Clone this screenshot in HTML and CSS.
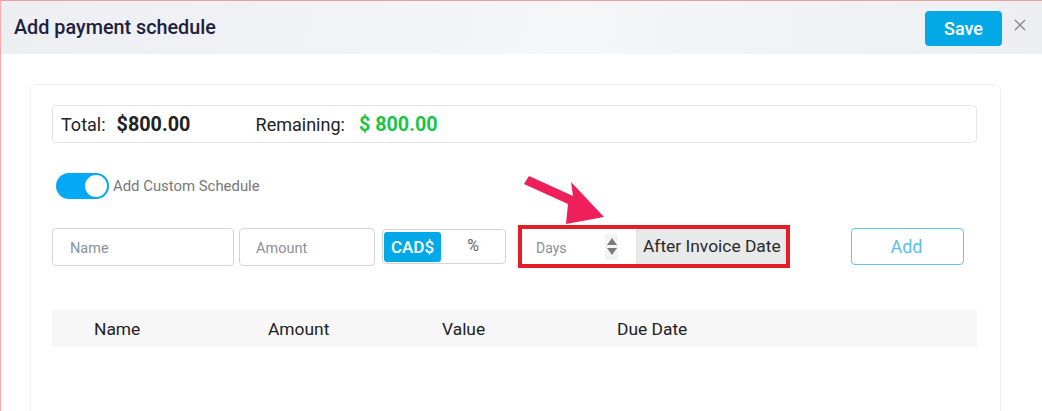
FILE: index.html
```html
<!DOCTYPE html>
<html>
<head>
<meta charset="utf-8">
<link rel="stylesheet" href="styles.css">
</head>
<body>
<div class="modal">
  <div class="modal-header">
    <h1 class="title">Add payment schedule</h1>
    <div class="header-actions">
      <button class="btn-save">Save</button>
      <span class="close">
        <svg width="12" height="12" viewBox="0 0 12 12"><path d="M1 1 L11 11 M11 1 L1 11" stroke="#888" stroke-width="1.3" fill="none"/></svg>
      </span>
    </div>
  </div>
  <div class="modal-body">
    <div class="card">
      <div class="totals">
        <span class="lbl">Total:</span>
        <span class="val">$800.00</span>
        <span class="lbl lbl-rem">Remaining:</span>
        <span class="val green">$ 800.00</span>
      </div>
      <div class="switch-row">
        <span class="switch"><span class="knob"></span></span>
        <span class="switch-label">Add Custom Schedule</span>
      </div>
      <div class="form-row">
        <div class="input in-name">Name</div>
        <div class="input in-amount">Amount</div>
        <div class="seg">
          <span class="seg-on">CAD$</span>
          <span class="seg-off">%</span>
        </div>
        <div class="highlight">
          <svg class="arrow" width="82" height="50" viewBox="0 0 82 50"><polygon points="5,1 49,21 47,7 80,42 42,49 44,29 0,9" fill="#ee1f5b"/></svg>
          <div class="days">
            <span class="days-ph">Days</span>
            <span class="spin"><span class="up"></span><span class="down"></span></span>
          </div>
          <div class="after">After Invoice Date</div>
        </div>
        <button class="btn-add">Add</button>
      </div>
      <div class="table-head">
        <span class="th th-name">Name</span>
        <span class="th th-amount">Amount</span>
        <span class="th th-value">Value</span>
        <span class="th th-due">Due Date</span>
      </div>
    </div>
  </div>
</div>
</body>
</html>
```
FILE: styles.css
```css
* { box-sizing: border-box; }
html, body { margin: 0; padding: 0; background: #fff; }
body { font-family: Roboto, "Liberation Sans", sans-serif; width: 1042px; height: 411px; overflow: hidden; }

.modal {
  width: 1042px;
  height: 411px;
  border-left: 1px solid #f5a9a9;
  border-top: 1px solid #e9a0a0;
  background: #fff;
}
.modal-header {
  height: 53px;
  display: flex;
  align-items: center;
  justify-content: space-between;
  padding: 0 16px 0 13px;
  background: linear-gradient(100deg, #eceef2 0%, #f5f6f8 55%, #eceef2 100%);
}
.title {
  margin: 0;
  font-size: 19.8px;
  font-weight: 500;
  color: #1d2140;
  padding-bottom: 1px;
}
.header-actions { display: flex; align-items: center; gap: 12px; }
.btn-save {
  width: 77px;
  height: 35px;
  border: none;
  border-radius: 4px;
  background: #03a9e6;
  color: #fff;
  font-family: inherit;
  font-size: 18px;
  font-weight: 500;
  padding: 0;
  margin-top: 1px;
}
.close { display: flex; width: 12px; height: 12px; margin-top: -5px; }

.modal-body { padding: 30px 0 0 29px; }
.card {
  width: 971px;
  height: 340px;
  border: 1px solid #efefef;
  border-radius: 6px;
  padding: 20px 23px 0 21px;
}
.totals {
  height: 38px;
  border: 1px solid #e6e6e6;
  border-radius: 4px;
  display: flex;
  align-items: center;
  padding-left: 8px;
  font-size: 18px;
  color: #222;
}
.lbl { margin-right: 11px; }
.val { font-weight: 700; font-size: 19.8px; color: #222; width: 139px; }
.val.green { color: #1dc44a; }
.lbl-rem { margin-right: 14px; }

.switch-row {
  display: flex;
  align-items: center;
  margin-top: 30px;
  padding-left: 4px;
  height: 26px;
}
.switch {
  width: 53px;
  height: 26px;
  border-radius: 13px;
  background: #03a9f4;
  display: flex;
  align-items: center;
  justify-content: flex-end;
  padding-right: 2px;
}
.knob { width: 22px; height: 22px; border-radius: 50%; background: #fff; }
.switch-label { font-size: 14.9px; color: #777; margin-left: 4px; }

.form-row {
  display: flex;
  align-items: center;
  margin-top: 26px;
  height: 43px;
}
.input {
  height: 38px;
  border: 1px solid #d3d5d8;
  border-radius: 4px;
  display: flex;
  align-items: center;
  padding-left: 17px;
  padding-top: 3px;
  font-size: 14.5px;
  color: #8a9199;
}
.in-name { width: 182px; }
.in-amount { width: 136px; margin-left: 5px; padding-left: 16px; }
.seg {
  width: 124px;
  height: 35px;
  margin-left: 7px;
  border: 1px solid #d3d5d8;
  border-radius: 4px;
  display: flex;
  align-items: center;
  padding-left: 1px;
}
.seg-on {
  width: 57px;
  height: 30px;
  background: #03a9e6;
  color: #fff;
  border-radius: 3px;
  font-size: 17px;
  font-weight: 500;
  display: flex;
  align-items: center;
  justify-content: center;
}
.seg-off { flex: 1; text-align: center; font-size: 16px; color: #666; padding-bottom: 3px; }

.highlight {
  position: relative;
  margin-left: 12px;
  width: 272px;
  height: 43px;
  border: 4px solid #e31e26;
  display: flex;
}
.arrow { position: absolute; left: 2px; top: -54px; }
.days {
  width: 115px;
  background: #fff;
  display: flex;
  align-items: center;
  justify-content: space-between;
  padding: 0 4px 0 14px;
  border-right: 1px solid #e2e2e2;
}
.days-ph { font-size: 14px; color: #8a9199; padding-top: 3px; }
.spin {
  width: 13px;
  height: 26px;
  background: #f3f3f3;
  display: flex;
  flex-direction: column;
  align-items: center;
  justify-content: center;
  gap: 3px;
  margin-right: 14px;
}
.up { width: 0; height: 0; border-left: 5px solid transparent; border-right: 5px solid transparent; border-bottom: 7px solid #7a7a7a; }
.down { width: 0; height: 0; border-left: 5px solid transparent; border-right: 5px solid transparent; border-top: 7px solid #7a7a7a; }
.after {
  flex: 1;
  background: #e8e9eb;
  font-size: 17.4px;
  color: #2a2a2a;
  display: flex;
  align-items: center;
  padding-left: 6px;
  padding-bottom: 2px;
}
.btn-add {
  margin-left: 61px;
  width: 113px;
  height: 37px;
  border: 1px solid #5bc6ee;
  border-radius: 4px;
  background: #fff;
  color: #5bc0eb;
  font-family: inherit;
  font-size: 18px;
  padding: 0 2px 0 0;
}

.table-head {
  margin-top: 42px;
  height: 37px;
  background: #f7f7f7;
  display: flex;
  align-items: center;
  font-size: 17.4px;
  color: #222;
}
.th { display: inline-block; }
.th-name { margin-left: 42px; width: 174px; }
.th-amount { width: 174px; }
.th-value { width: 175px; }
```
